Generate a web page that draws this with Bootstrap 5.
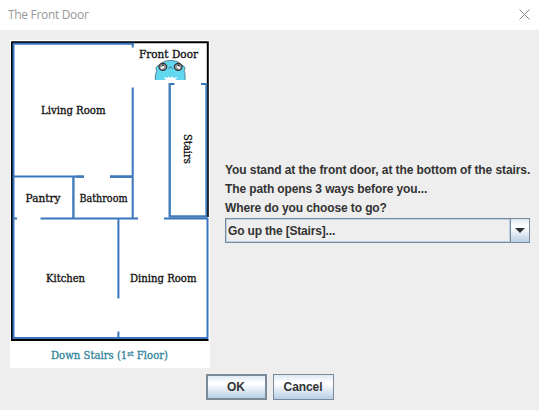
<!DOCTYPE html>
<html lang="en">
<head>
<meta charset="utf-8">
<meta name="viewport" content="width=device-width, initial-scale=1">
<title>The Front Door</title>
<link href="https://cdn.jsdelivr.net/npm/bootstrap@5.3.0/dist/css/bootstrap.min.css" rel="stylesheet">
<style>
  body { background: #eee; color: #333; font-family: "Liberation Sans", Arial, sans-serif; font-size: 12px; font-weight: 700; overflow: hidden; }
  .dialog { width: 539px; height: 410px; }
  .titlebar { height: 30px; padding: 0 9px 0 8px; color: #999; font: 400 12px "Open Sans", "Noto Sans", sans-serif; }
  .title-text { letter-spacing: -.32px; margin-top: -1px; }
  .close-x { border: 0; background: none; padding: 0; line-height: 0; margin-top: -2px; }
  .content { padding: 10px 9px 0 10px; gap: 15px; }
  .floorplan { width: 200px; height: 328px; flex: none; }
  .prompt { width: 305px; padding-top: 121px; }
  .prompt p { line-height: 19px; white-space: nowrap; letter-spacing: -.11px; }
  .prompt p:first-child { letter-spacing: -.08px; }
  .combo { height: 25px; border: 1px solid #7a8a99; background: #eee; padding: 0; border-radius: 0; color: #333; font-weight: 700; font-size: 12px; }
  .combo-value { border: 1px solid #b8cfe5; padding-left: 1px; text-align: left; line-height: 22px; letter-spacing: -.17px; }
  .combo-arrow { width: 19px; border-left: 1px solid #7a8a99; }
  .metal { background: linear-gradient(#dde8f3 0, #fff 30%, #fff 36%, #b8cfe5 100%); }
  .actions { padding-top: 6px; gap: 6px; }
  .btn-metal { width: 61px; height: 26px; padding: 0; border: 1px solid #7a8a99; border-radius: 0; color: #333; font-size: 12px; font-weight: 700; line-height: 24px; letter-spacing: -.1px; }
  .btn-metal.is-default { border-width: 2px; line-height: 23px; }
  .room { font-family: "DejaVu Serif", Cambria, serif; font-size: 10.2px; font-weight: 400; fill: #111; stroke: #111; stroke-width: .3px; }
  .floor-name { fill: #31849b; stroke: #31849b; }
  .ordinal { font-size: 7px; }
</style>
</head>
<body>
<main class="dialog d-flex flex-column">
  <header class="titlebar bg-white d-flex align-items-center justify-content-between">
    <span class="title-text">The Front Door</span>
    <button class="close-x" aria-label="Close"><svg width="11" height="11" viewBox="0 0 11 11"><path d="M.5.5l10 10M10.5.5l-10 10" stroke="#888" fill="none"/></svg></button>
  </header>
  <section class="content d-flex">
    <svg class="floorplan" viewBox="10 40 200 328" role="img" aria-label="Floor plan">
      <path fill="#fff" d="M10 40h200v328H10z"/>
      <!-- outer walls -->
      <path d="M12 42.300H207.800V217M12 41.500V340H208.500" fill="none" stroke="#000" stroke-width="2"/>
      <!-- inner walls -->
      <g fill="none" stroke="#3a74bd" stroke-width="2">
        <path d="M13.500 43.800H134M13.500 43V338H207.500V218"/>
        <path d="M132.700 43v4.500M132.700 87.500V218M14 176.500H84M110 176.500H133M13 218.500h4M40.500 218.500H138M164 218.500H208"/>
        <path d="M118.400 218V298.500M118.400 331.500V338M174.500 84H170M201 84h6"/>
      </g>
      <path d="M73.400 176V218M110 176.700H133M76 176.700h8M169.700 83V217M169 216.500H207" fill="none" stroke="#447cba" stroke-width="2.400"/>
      <path d="M206.300 83V217" fill="none" stroke="#447cba" stroke-width="2"/>
      <!-- mascot peeking over the door -->
      <path d="M155.300 80c-.2-4 .2-7 1.700-9-2-2.500-.5-5.500 2-5.500 3-3.500 6.500-5 11.500-5s9 1.500 11.500 5c2.500 0 4 3 2 5.500 1.200 2 1.300 5 1 9z" fill="#62d8f0"/>
      <path d="M155.300 80c-.2-4 .2-7 1.700-9-2-2.500-.5-5.500 2-5.500 3-3.500 6.500-5 11.500-5s9 1.500 11.500 5c2.500 0 4 3 2 5.500 1.200 2 1.300 5 1 9" fill="none" stroke="#356" stroke-width=".7"/>
      <path d="M166 80.300l-2.500-3.300 4 1 .5-1.500 2.500 1.300 2.500-1.300.5 1.500 4-1-2.500 3.300z" fill="#fff"/>
      <g stroke="#333" stroke-width="1.200">
        <ellipse cx="162.800" cy="66.800" rx="3.900" ry="3.500" fill="#999"/>
        <ellipse cx="178.200" cy="66.800" rx="3.900" ry="3.500" fill="#999"/>
        <path d="M161 68.500l3-2M177 66.500l3 2" stroke="#fff" stroke-width="1.700"/>
        <path d="M162 65l2 .5M177.500 65l2 .5" stroke="#222"/>
        <path d="M168.500 68.500l2-1.500 2 1.500" fill="none" stroke="#245" stroke-width=".8"/>
      </g>
      <g class="room">
        <text x="139" y="58" textLength="59" lengthAdjust="spacingAndGlyphs">Front Door</text>
        <text x="41" y="114" textLength="64.500" lengthAdjust="spacingAndGlyphs">Living Room</text>
        <text x="25.500" y="202" textLength="35" lengthAdjust="spacingAndGlyphs">Pantry</text>
        <text x="79.500" y="202" textLength="48" lengthAdjust="spacingAndGlyphs">Bathroom</text>
        <text x="46" y="282" textLength="39" lengthAdjust="spacingAndGlyphs">Kitchen</text>
        <text x="130" y="281.500" textLength="66.500" lengthAdjust="spacingAndGlyphs">Dining Room</text>
        <text transform="translate(183.500 134) rotate(90)" textLength="30" lengthAdjust="spacingAndGlyphs">Stairs</text>
        <text class="floor-name" x="51" y="359" textLength="117" lengthAdjust="spacingAndGlyphs">Down Stairs (1<tspan class="ordinal" dy="-3.500">st</tspan><tspan dy="3.500"> Floor)</tspan></text>
      </g>
    </svg>
    <div class="prompt">
      <p class="mb-0">You stand at the front door, at the bottom of the stairs.</p>
      <p class="mb-0">The path opens 3 ways before you...</p>
      <p class="mb-0">Where do you choose to go?</p>
      <button class="combo d-flex w-100" aria-haspopup="listbox">
        <span class="combo-value flex-grow-1 h-100">Go up the [Stairs]...</span>
        <span class="combo-arrow metal h-100 d-flex align-items-center justify-content-center"><svg width="10" height="5" viewBox="0 0 10 5"><path d="M0 0h10L5 5z" fill="#333"/></svg></span>
      </button>
    </div>
  </section>
  <footer class="actions d-flex justify-content-center">
    <button class="btn btn-metal metal is-default">OK</button>
    <button class="btn btn-metal metal">Cancel</button>
  </footer>
</main>
<script src="https://cdn.jsdelivr.net/npm/bootstrap@5.3.0/dist/js/bootstrap.bundle.min.js"></script>
</body>
</html>
